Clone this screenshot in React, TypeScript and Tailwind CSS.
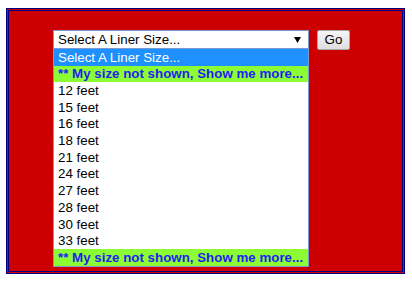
const sizes = ['12 feet', '15 feet', '16 feet', '18 feet', '21 feet', '24 feet', '27 feet', '28 feet', '30 feet', '33 feet'];

function MoreRow() {
  return (
    <div className="flex-1 flex items-center pl-[4px] bg-[#8cfc34] text-[#1f1ff0] font-bold whitespace-nowrap">
      ** My size not shown, Show me more...
    </div>
  );
}

export default function App() {
  return (
    <div className="min-h-screen bg-white pt-[8px] pl-[6px] font-['Liberation_Sans',Arial,sans-serif] text-[13.33px]">
      <div className="w-[399px] h-[266px] border-[3px] border-double border-[#000080] bg-[#cc0000] pl-[44px] pt-[19px]">
        <div className="flex items-start gap-[8px]">
          <div className="w-[256px] flex flex-col">
            <div className="h-[19px] border border-[#7a9bd0] bg-white flex items-center justify-between pl-[4px] pr-[7px] text-black">
              <span>Select A Liner Size...</span>
              <svg width="7" height="6" viewBox="0 0 7 6">
                <path d="M0 0 H7 L3.5 6 Z" fill="#000" />
              </svg>
            </div>
            <div className="h-[218px] flex flex-col bg-white border-x border-b border-[#7a9bd0] leading-none">
              <div className="flex-1 flex items-center pl-[4px] bg-[#1e90ff] text-white">Select A Liner Size...</div>
              <MoreRow />
              {sizes.map((s) => (
                <div key={s} className="flex-1 flex items-center pl-[4px] text-black">
                  {s}
                </div>
              ))}
              <MoreRow />
            </div>
          </div>
          <button className="w-[33px] h-[20px] border border-[#a6a6a6] rounded-[2px] bg-gradient-to-b from-[#f6f6f6] to-[#dedede] text-black text-[13.33px] flex items-center justify-center">
            Go
          </button>
        </div>
      </div>
    </div>
  );
}
